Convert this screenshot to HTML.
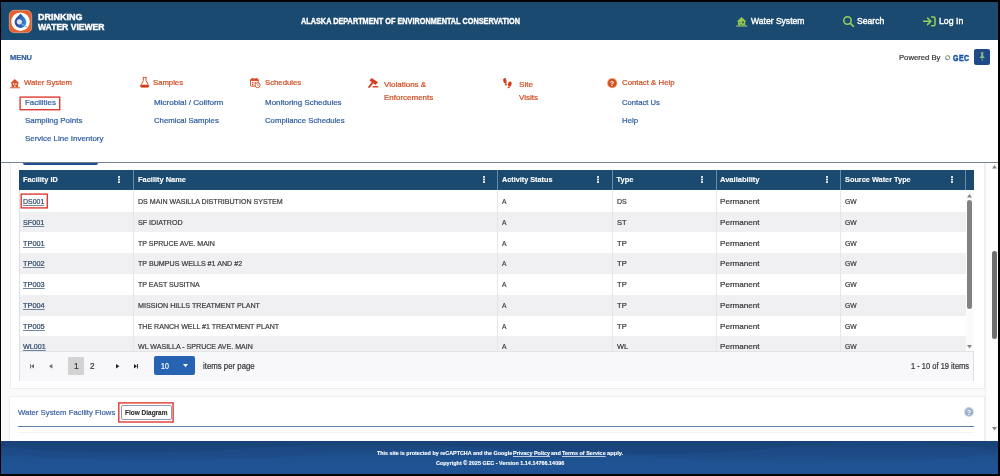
<!DOCTYPE html>
<html lang="en">
<head>
<meta charset="utf-8">
<title>Drinking Water Viewer</title>
<style>
*{box-sizing:border-box;margin:0;padding:0}
html,body{width:1000px;height:476px;overflow:hidden;background:#000}
body{position:relative;font-family:"Liberation Sans",sans-serif;color:#222}
.a{position:absolute}
.t{position:absolute;white-space:nowrap;line-height:1;z-index:5;transform-origin:0 0}
svg{position:absolute;overflow:visible}
#page{left:1.4px;top:2px;width:996.4px;height:472px;background:#fafafb}
#hdr{left:1.4px;top:2px;width:996.4px;height:38px;background:#1b4a70}
#menu{left:1.4px;top:40px;width:996.4px;height:122px;background:#fff}
#menuline{left:1.4px;top:162px;width:996.6px;height:1px;background:#75828f}
.card{background:#fff;border:1px solid #eceef1}
#card1{left:10px;top:150px;width:974.5px;height:238.5px}
#card2{left:9px;top:395.5px;width:975.5px;height:60px}
#btnrem{left:23.2px;top:160px;width:75.2px;height:5px;background:#1e4f8c;border-radius:0 0 3px 3px}
#grid{left:19px;top:170px;width:954.5px;height:211px;background:#fff;border:1px solid #dcdfe3;border-top:0}
#ghead{left:19px;top:170px;width:954.5px;height:20px;background:#1b4a70}
.sep{top:170px;width:1px;height:20px;background:#6f8ba3}
.vl{top:190px;width:1px;height:161px;background:#e4e6e9}
.row{left:19.5px;width:946px;height:20.8px;background:#f0f0f2}
.kb{width:2px;height:1.9px;background:#fff;border-radius:40%;box-shadow:0 2.5px 0 #fff,0 5px 0 #fff}
#pager{left:19.5px;top:351.2px;width:953.5px;height:29.4px;background:#f8f8fa;border-top:1px solid #e2e4e7}
#pg1{left:68.2px;top:356.8px;width:15.6px;height:18.3px;background:#d3d3d4;border-radius:1px}
#dd{left:153.8px;top:356.2px;width:40.8px;height:19.3px;background:#2763b3;border-radius:2px}
#gsb{left:965.5px;top:190px;width:8px;height:161px;background:#fbfbfb}
.thumb{background:#828282;border-radius:3px}
#psb{left:984.5px;top:163px;width:13.5px;height:278px;background:#fdfdfe;border-left:1px solid #eef0f3}
#foot{left:1.4px;top:441px;width:996.4px;height:33px;background:linear-gradient(180deg,#1a447b 0%,#1c4a84 30%,#1f5190 70%,#1f5190 100%);overflow:hidden}
#flowbtn{left:120.6px;top:405.1px;width:51.2px;height:15px;background:#fff;border:1px solid #8f9db2;border-radius:2px}
#blueline{left:18px;top:425.9px;width:955.5px;height:1px;background:#5a80a8}
#pin{left:973.9px;top:48.9px;width:16px;height:16px;background:#1f4a8a;border-radius:2px}
#txt{left:0;top:0;width:1000px;height:476px;will-change:transform}

</style>
</head>
<body>
<div class="a" id="page"></div>
<!-- cards / grid -->
<div class="a card" id="card1"></div>
<div class="a card" id="card2"></div>
<div class="a" id="grid"></div>
<div class="a row" style="top:211.6px"></div>
<div class="a row" style="top:253.2px"></div>
<div class="a row" style="top:294.8px"></div>
<div class="a row" style="top:336.4px;height:15px"></div>
<div class="a vl" style="left:133px"></div>
<div class="a vl" style="left:497px"></div>
<div class="a vl" style="left:611.5px"></div>
<div class="a vl" style="left:716px"></div>
<div class="a vl" style="left:840px"></div>
<div class="a" id="ghead"></div>
<div class="a sep" style="left:133px"></div>
<div class="a sep" style="left:497px"></div>
<div class="a sep" style="left:611.5px"></div>
<div class="a sep" style="left:716px"></div>
<div class="a sep" style="left:840px"></div>
<div class="a sep" style="left:965px"></div>
<div class="a kb" style="left:117.95px;top:176.3px"></div>
<div class="a kb" style="left:482.75px;top:176.3px"></div>
<div class="a kb" style="left:596.95px;top:176.3px"></div>
<div class="a kb" style="left:701.15px;top:176.3px"></div>
<div class="a kb" style="left:825.85px;top:176.3px"></div>
<div class="a kb" style="left:950.65px;top:176.3px"></div>
<div class="a" id="gsb"></div>
<div class="a thumb" style="left:967.2px;top:200.4px;width:4.6px;height:109px"></div>
<svg style="left:967px;top:193.6px" width="5" height="3.4" viewBox="0 0 5 3.4"><path d="M0 3.4L2.5 0L5 3.4Z" fill="#858585"/></svg>
<svg style="left:967.2px;top:345.4px" width="5" height="3.4" viewBox="0 0 5 3.4"><path d="M0 0L2.5 3.4L5 0Z" fill="#858585"/></svg>
<div class="a" id="pager"></div>
<div class="a" id="pg1"></div>
<div class="a" id="dd"></div>
<svg style="left:182.5px;top:364.3px" width="5" height="3.2" viewBox="0 0 5 3.2"><path d="M0 0L2.5 3.2L5 0Z" fill="#fff"/></svg>
<svg style="left:30px;top:363.6px" width="4" height="4.4" viewBox="0 0 4 4.4"><path d="M0 0H0.9V4.4H0ZM4 0V4.4L1 2.2Z" fill="#6d6d6d"/></svg>
<svg style="left:49px;top:363.6px" width="3.4" height="4.4" viewBox="0 0 3.4 4.4"><path d="M3.4 0V4.4L0 2.2Z" fill="#6d6d6d"/></svg>
<svg style="left:116px;top:363.6px" width="3.4" height="4.4" viewBox="0 0 3.4 4.4"><path d="M0 0V4.4L3.4 2.2Z" fill="#222"/></svg>
<svg style="left:134px;top:363.6px" width="4" height="4.4" viewBox="0 0 4 4.4"><path d="M3.1 0H4V4.4H3.1ZM0 0V4.4L3 2.2Z" fill="#222"/></svg>
<!-- card 2 -->
<div class="a" id="flowbtn"></div>
<div class="a" id="blueline"></div>
<div class="a" style="left:18px;top:432px;width:955.5px;height:1px;background:#f2f4f7"></div>
<svg style="left:963.5px;top:407px" width="10" height="10" viewBox="0 0 10 10"><circle cx="5" cy="5" r="4.9" fill="#c7d1e2"/><circle cx="5" cy="5" r="3.8" fill="#9cadc9"/><text x="5" y="7.6" font-size="7" font-weight="bold" fill="#fff" text-anchor="middle" font-family="Liberation Sans, sans-serif">?</text></svg>
<!-- page scrollbar -->
<div class="a" id="psb"></div>
<div class="a thumb" style="left:992.1px;top:251.4px;width:4.8px;height:87.2px;background:#6f6f6f"></div>
<svg style="left:992px;top:165px" width="5" height="3.4" viewBox="0 0 5 3.4"><path d="M0 3.4L2.5 0L5 3.4Z" fill="#858585"/></svg>
<svg style="left:992px;top:426.6px" width="5" height="3.4" viewBox="0 0 5 3.4"><path d="M0 0L2.5 3.4L5 0Z" fill="#858585"/></svg>
<!-- menu -->
<div class="a" id="menu"></div>
<div class="a" id="menuline"></div>
<div class="a" id="btnrem" style="top:163px;height:2px"></div>
<svg style="left:0;top:0" width="1000" height="476" viewBox="0 0 1000 476"><g fill="none" stroke="#de3b30" stroke-width="1.4"><rect x="20.1" y="97.1" width="39.6" height="12.6"/><rect x="21.2" y="194.1" width="26.1" height="13.8"/><rect x="118.8" y="402.9" width="54.3" height="19.1"/></g></svg>
<div class="a" id="pin"></div>
<!-- menu icons -->
<svg style="left:10px;top:78.8px" width="10" height="9.4" viewBox="0 0 10 9.4"><path d="M4.8 0L9.3 4.3H8.1V8.1H1.6V4.3H0.4Z" fill="#d8522b"/><rect x="2.9" y="4.3" width="1.4" height="1.5" fill="#fff" opacity="0.9"/><rect x="5.3" y="4.3" width="1.4" height="1.5" fill="#fff" opacity="0.9"/><rect x="4.1" y="6.5" width="1.5" height="1.6" fill="#fff" opacity="0.8"/><rect x="0" y="8.3" width="10" height="1" rx="0.4" fill="#d8522b"/></svg>
<svg style="left:139.6px;top:77.4px" width="9.4" height="10.6" viewBox="0 0 9.4 10.6"><path d="M3.4 0.4V3.6L0.6 8.6Q0.2 10 1.4 10H8Q9.2 10 8.8 8.6L6 3.6V0.4" stroke="#d7512a" stroke-width="0.95" fill="none" stroke-linejoin="round"/><path d="M2.6 0.45H6.8" stroke="#d7512a" stroke-width="0.9"/><path d="M1.5 7.8H7.9L8.8 9.6Q8.8 10.2 8 10.2H1.4Q0.6 10.2 0.6 9.6Z" fill="#d1381d"/></svg>
<svg style="left:250.2px;top:78.2px" width="10.4" height="10" viewBox="0 0 10.4 10"><rect x="0.5" y="0.9" width="7.8" height="7.3" rx="1" fill="#fff" stroke="#d7512a" stroke-width="0.95"/><path d="M0.5 1.9Q0.5 0.9 1.5 0.9H7.3Q8.3 0.9 8.3 1.9V2.9H0.5Z" fill="#d7512a"/><rect x="2" y="0" width="1" height="1.6" fill="#d7512a"/><rect x="5.8" y="0" width="1" height="1.6" fill="#d7512a"/><rect x="2" y="4.1" width="1.5" height="1.3" fill="#d7512a"/><rect x="4.4" y="4.1" width="1.5" height="1.3" fill="#d7512a"/><rect x="2" y="6" width="1.5" height="1.3" fill="#d7512a"/><circle cx="7.6" cy="7.2" r="2.5" fill="#fff" stroke="#d7512a" stroke-width="0.95"/><path d="M7.6 5.9V7.3H8.6" stroke="#d7512a" stroke-width="0.7" fill="none"/></svg>
<svg style="left:367.6px;top:78.4px" width="10.6" height="9.8" viewBox="0 0 10.6 9.8"><path d="M3.5 0L9.9 4.1L7.7 7L1.5 2.6Z" fill="#d4401f"/><path d="M5.2 3.8L1.1 9" stroke="#d4401f" stroke-width="1.9" stroke-linecap="round"/><path d="M4.7 8.8H10.3" stroke="#d4401f" stroke-width="1.4"/></svg>
<svg style="left:503.4px;top:77.8px" width="9" height="10.2" viewBox="0 0 9 10.2"><ellipse cx="1.9" cy="2.8" rx="1.65" ry="2.75" transform="rotate(-12 1.9 2.8)" fill="#d4401f"/><ellipse cx="2.9" cy="6.5" rx="1.1" ry="0.9" fill="#d4401f"/><ellipse cx="6.8" cy="6.1" rx="1.8" ry="2.7" transform="rotate(12 6.8 6.1)" fill="#d4401f"/><ellipse cx="5.7" cy="9.5" rx="1.1" ry="0.8" fill="#d4401f"/></svg>
<svg style="left:607.2px;top:77.9px" width="10.4" height="10.4" viewBox="0 0 10.4 10.4"><circle cx="5.2" cy="5.2" r="5.1" fill="#eb9b7c"/><circle cx="5.2" cy="5.2" r="4.1" fill="#d4501e"/><text x="5.2" y="7.7" font-size="6.8" font-weight="bold" fill="#fff" text-anchor="middle" font-family="Liberation Sans, sans-serif">?</text></svg>
<!-- GEC ring + pin -->
<svg style="left:944.6px;top:54.9px" width="5.4" height="5.4" viewBox="0 0 5.4 5.4"><circle cx="2.7" cy="2.7" r="2.05" fill="none" stroke="#8b9a86" stroke-width="1"/><path d="M2.7 0.65A2.05 2.05 0 0 1 4.75 2.7" stroke="#7fae55" stroke-width="1" fill="none"/><path d="M0.65 2.7A2.05 2.05 0 0 0 2.7 4.75" stroke="#5f86ad" stroke-width="1" fill="none"/></svg>
<svg style="left:978.7px;top:52.2px" width="6.4" height="9" viewBox="0 0 6.4 9"><path d="M1.8 0.2H4.6V0.9H4.2V3.9L5.7 5.4V6.1H0.7V5.4L2.2 3.9V0.9H1.8Z" fill="#86c07c"/><path d="M3.2 6.1V8.8" stroke="#86c07c" stroke-width="0.8"/></svg>

<!-- header -->
<div class="a" id="hdr"></div>
<!-- logo -->
<svg style="left:9.3px;top:9.7px" width="23" height="23" viewBox="0 0 23 23"><defs><linearGradient id="dg" x1="0" y1="0" x2="1" y2="0"><stop offset="0" stop-color="#2a4a94"/><stop offset="0.55" stop-color="#2c62b4"/><stop offset="1" stop-color="#3b92dc"/></linearGradient></defs><rect x="0.3" y="0.3" width="22.4" height="22.4" rx="5" fill="#e7612c" stroke="#f3b79c" stroke-width="0.6"/><circle cx="11.5" cy="11.7" r="9.3" fill="#fff"/><path d="M11.5 3.4C13.6 6 17.4 8.6 17.4 12.1A5.9 5.9 0 0 1 5.6 12.1C5.6 8.6 9.4 6 11.5 3.4Z" fill="url(#dg)"/><circle cx="10.4" cy="11.8" r="2.6" fill="#e3dff0"/><path d="M12.6 13.9L17.6 17" stroke="#7db7e8" stroke-width="1.1" stroke-linecap="round"/></svg>
<!-- nav icons -->
<svg style="left:736px;top:16.8px" width="11.4" height="9.6" viewBox="0 0 11.4 9.6"><path d="M5.6 0L10.4 4.5H9.2V8.3H2V4.5H0.8Z" fill="#95ca4c"/><rect x="3.3" y="4.7" width="1.3" height="1.4" fill="#1b4a70" opacity="0.5"/><rect x="6.1" y="4.5" width="1.8" height="1.8" fill="#1b4a70" opacity="0.9"/><rect x="4.5" y="6.9" width="1.4" height="1.4" fill="#1b4a70" opacity="0.45"/><rect x="0" y="8.4" width="11.4" height="1.1" rx="0.4" fill="#a5d465"/></svg>
<svg style="left:842.6px;top:16.2px" width="11" height="11" viewBox="0 0 11 11"><circle cx="4.5" cy="4.5" r="3.7" fill="none" stroke="#9bcf5a" stroke-width="1.5"/><path d="M7.4 7.4L10.4 10.4" stroke="#9bcf5a" stroke-width="1.6" stroke-linecap="round"/></svg>
<svg style="left:922.6px;top:16px" width="13" height="11" viewBox="0 0 13 11"><path d="M0.5 5.3H7.2" stroke="#9bcf5a" stroke-width="1.5" stroke-linecap="round"/><path d="M4.5 2L7.9 5.3L4.5 8.6" stroke="#9bcf5a" stroke-width="1.5" fill="none" stroke-linecap="round" stroke-linejoin="round"/><path d="M8.6 0.9H10.7Q12 0.9 12 2.2V8.4Q12 9.7 10.7 9.7H8.6" stroke="#9bcf5a" stroke-width="1.5" fill="none" stroke-linecap="round"/></svg>

<!-- footer -->
<div class="a" id="foot"><svg style="left:0;top:0" width="996" height="33" viewBox="0 0 996 33"><path d="M0 6Q120 16 250 7T520 9T780 6T996 10V0H0Z" fill="#183f73" opacity="0.35"/><path d="M0 14Q160 24 330 13T660 16T996 13V33H0Z" fill="#22589a" opacity="0.28"/></svg></div>
<div class="a" id="txt">
<span class="t" id="t0" style="left:37.70px;top:13.00px;font-size:8.7px;color:#fff;font-weight:bold;transform:scaleX(1.033);-webkit-text-stroke:0.4px #fff;">DRINKING</span>
<span class="t" id="t1" style="left:37.70px;top:23.00px;font-size:8.7px;color:#fff;font-weight:bold;transform:scaleX(0.986);-webkit-text-stroke:0.4px #fff;">WATER VIEWER</span>
<span class="t" id="t2" style="left:301.10px;top:18.00px;font-size:8.2px;color:#fff;font-weight:bold;transform:scaleX(0.891);-webkit-text-stroke:0.35px #fff;">ALASKA DEPARTMENT OF ENVIRONMENTAL CONSERVATION</span>
<span class="t" id="t3" style="left:750.80px;top:17.00px;font-size:8.9px;color:#fff;transform:scaleX(0.964);-webkit-text-stroke:0.38px #fff;">Water System</span>
<span class="t" id="t4" style="left:856.90px;top:17.00px;font-size:8.9px;color:#fff;transform:scaleX(0.971);-webkit-text-stroke:0.38px #fff;">Search</span>
<span class="t" id="t5" style="left:939.10px;top:17.00px;font-size:8.9px;color:#fff;transform:scaleX(0.984);-webkit-text-stroke:0.38px #fff;">Log In</span>
<span class="t" id="t6" style="left:9.70px;top:54.00px;font-size:7.5px;color:#2d5c9f;font-weight:bold;transform:scaleX(0.996);-webkit-text-stroke:0.2px #2d5c9f;">MENU</span>
<span class="t" id="t7" style="left:898.60px;top:54.00px;font-size:7.55px;color:#333;transform:scaleX(1.017);-webkit-text-stroke:0.2px #333;">Powered By</span>
<span class="t" id="t8" style="left:952.70px;top:54.00px;font-size:8.6px;color:#1452a3;font-weight:bold;transform:scaleX(0.820);-webkit-text-stroke:0.45px #1452a3;letter-spacing:0.5px;">GEC</span>
<span class="t" id="t9" style="left:24.20px;top:79.00px;font-size:7.55px;color:#cf4a1f;transform:scaleX(1.019);-webkit-text-stroke:0.2px #cf4a1f;">Water System</span>
<span class="t" id="t10" style="left:24.80px;top:99.00px;font-size:7.55px;color:#2d5c9f;transform:scaleX(1.056);-webkit-text-stroke:0.2px #2d5c9f;">Facilities</span>
<span class="t" id="t11" style="left:24.80px;top:117.00px;font-size:7.55px;color:#2d5c9f;transform:scaleX(1.052);-webkit-text-stroke:0.2px #2d5c9f;">Sampling Points</span>
<span class="t" id="t12" style="left:24.60px;top:135.00px;font-size:7.55px;color:#2d5c9f;transform:scaleX(1.050);-webkit-text-stroke:0.2px #2d5c9f;">Service Line Inventory</span>
<span class="t" id="t13" style="left:153.20px;top:79.00px;font-size:7.55px;color:#cf4a1f;transform:scaleX(1.021);-webkit-text-stroke:0.2px #cf4a1f;">Samples</span>
<span class="t" id="t14" style="left:154.00px;top:99.00px;font-size:7.55px;color:#2d5c9f;transform:scaleX(1.074);-webkit-text-stroke:0.2px #2d5c9f;">Microbial / Coliform</span>
<span class="t" id="t15" style="left:154.00px;top:117.00px;font-size:7.55px;color:#2d5c9f;transform:scaleX(1.030);-webkit-text-stroke:0.2px #2d5c9f;">Chemical Samples</span>
<span class="t" id="t16" style="left:264.60px;top:79.00px;font-size:7.55px;color:#cf4a1f;transform:scaleX(1.027);-webkit-text-stroke:0.2px #cf4a1f;">Schedules</span>
<span class="t" id="t17" style="left:265.20px;top:99.00px;font-size:7.55px;color:#2d5c9f;transform:scaleX(1.055);-webkit-text-stroke:0.2px #2d5c9f;">Monitoring Schedules</span>
<span class="t" id="t18" style="left:265.20px;top:117.00px;font-size:7.55px;color:#2d5c9f;transform:scaleX(1.031);-webkit-text-stroke:0.2px #2d5c9f;">Compliance Schedules</span>
<span class="t" id="t19" style="left:384.00px;top:81.00px;font-size:7.55px;color:#cf4a1f;transform:scaleX(1.062);-webkit-text-stroke:0.2px #cf4a1f;">Violations &amp;</span>
<span class="t" id="t20" style="left:384.00px;top:94.00px;font-size:7.55px;color:#cf4a1f;transform:scaleX(1.057);-webkit-text-stroke:0.2px #cf4a1f;">Enforcements</span>
<span class="t" id="t21" style="left:519.20px;top:81.00px;font-size:7.55px;color:#cf4a1f;transform:scaleX(1.076);-webkit-text-stroke:0.2px #cf4a1f;">Site</span>
<span class="t" id="t22" style="left:519.20px;top:94.00px;font-size:7.55px;color:#cf4a1f;transform:scaleX(1.061);-webkit-text-stroke:0.2px #cf4a1f;">Visits</span>
<span class="t" id="t23" style="left:621.60px;top:79.00px;font-size:7.55px;color:#cf4a1f;transform:scaleX(1.036);-webkit-text-stroke:0.2px #cf4a1f;">Contact &amp; Help</span>
<span class="t" id="t24" style="left:622.40px;top:99.00px;font-size:7.55px;color:#2d5c9f;transform:scaleX(1.012);-webkit-text-stroke:0.2px #2d5c9f;">Contact Us</span>
<span class="t" id="t25" style="left:622.40px;top:117.00px;font-size:7.55px;color:#2d5c9f;transform:scaleX(1.043);-webkit-text-stroke:0.2px #2d5c9f;">Help</span>
<span class="t" id="t26" style="left:22.50px;top:176.00px;font-size:7.55px;color:#fff;font-weight:bold;transform:scaleX(0.976);-webkit-text-stroke:0.12px #fff;">Facility ID</span>
<span class="t" id="t27" style="left:137.60px;top:176.00px;font-size:7.55px;color:#fff;font-weight:bold;transform:scaleX(0.986);-webkit-text-stroke:0.12px #fff;">Facility Name</span>
<span class="t" id="t28" style="left:501.60px;top:176.00px;font-size:7.55px;color:#fff;font-weight:bold;transform:scaleX(0.963);-webkit-text-stroke:0.12px #fff;">Activity Status</span>
<span class="t" id="t29" style="left:616.50px;top:176.00px;font-size:7.55px;color:#fff;font-weight:bold;-webkit-text-stroke:0.12px #fff;">Type</span>
<span class="t" id="t30" style="left:720.00px;top:176.00px;font-size:7.55px;color:#fff;font-weight:bold;-webkit-text-stroke:0.12px #fff;">Availability</span>
<span class="t" id="t31" style="left:845.10px;top:176.00px;font-size:7.55px;color:#fff;font-weight:bold;transform:scaleX(0.973);-webkit-text-stroke:0.12px #fff;">Source Water Type</span>
<span class="t" id="t32" style="left:22.90px;top:198.00px;font-size:7.55px;color:#2a4668;transform:scaleX(0.923);-webkit-text-stroke:0.2px #2a4668;text-decoration:underline;text-underline-offset:0.8px;text-decoration-thickness:0.6px;text-decoration-color:rgba(42,70,104,0.65);">DS001</span>
<span class="t" id="t33" style="left:137.60px;top:198.00px;font-size:7.55px;color:#383838;transform:scaleX(0.939);-webkit-text-stroke:0.2px #383838;">DS MAIN WASILLA DISTRIBUTION SYSTEM</span>
<span class="t" id="t34" style="left:501.60px;top:198.00px;font-size:7.55px;color:#383838;transform:scaleX(0.892);-webkit-text-stroke:0.2px #383838;">A</span>
<span class="t" id="t35" style="left:616.50px;top:198.00px;font-size:7.55px;color:#383838;transform:scaleX(0.925);-webkit-text-stroke:0.2px #383838;">DS</span>
<span class="t" id="t36" style="left:720.00px;top:198.00px;font-size:7.55px;color:#383838;transform:scaleX(1.073);-webkit-text-stroke:0.2px #383838;">Permanent</span>
<span class="t" id="t37" style="left:845.10px;top:198.00px;font-size:7.55px;color:#383838;transform:scaleX(0.900);-webkit-text-stroke:0.2px #383838;">GW</span>
<span class="t" id="t38" style="left:22.90px;top:219.00px;font-size:7.55px;color:#2a4668;transform:scaleX(0.957);-webkit-text-stroke:0.2px #2a4668;text-decoration:underline;text-underline-offset:0.8px;text-decoration-thickness:0.6px;text-decoration-color:rgba(42,70,104,0.65);">SF001</span>
<span class="t" id="t39" style="left:137.60px;top:219.00px;font-size:7.55px;color:#383838;transform:scaleX(0.944);-webkit-text-stroke:0.2px #383838;">SF IDIATROD</span>
<span class="t" id="t40" style="left:501.60px;top:219.00px;font-size:7.55px;color:#383838;transform:scaleX(0.892);-webkit-text-stroke:0.2px #383838;">A</span>
<span class="t" id="t41" style="left:616.50px;top:219.00px;font-size:7.55px;color:#383838;transform:scaleX(1.005);-webkit-text-stroke:0.2px #383838;">ST</span>
<span class="t" id="t42" style="left:720.00px;top:219.00px;font-size:7.55px;color:#383838;transform:scaleX(1.073);-webkit-text-stroke:0.2px #383838;">Permanent</span>
<span class="t" id="t43" style="left:845.10px;top:219.00px;font-size:7.55px;color:#383838;transform:scaleX(0.900);-webkit-text-stroke:0.2px #383838;">GW</span>
<span class="t" id="t44" style="left:22.90px;top:240.00px;font-size:7.55px;color:#2a4668;transform:scaleX(0.975);-webkit-text-stroke:0.2px #2a4668;text-decoration:underline;text-underline-offset:0.8px;text-decoration-thickness:0.6px;text-decoration-color:rgba(42,70,104,0.65);">TP001</span>
<span class="t" id="t45" style="left:137.60px;top:240.00px;font-size:7.55px;color:#383838;transform:scaleX(0.934);-webkit-text-stroke:0.2px #383838;">TP SPRUCE AVE. MAIN</span>
<span class="t" id="t46" style="left:501.60px;top:240.00px;font-size:7.55px;color:#383838;transform:scaleX(0.892);-webkit-text-stroke:0.2px #383838;">A</span>
<span class="t" id="t47" style="left:616.50px;top:240.00px;font-size:7.55px;color:#383838;transform:scaleX(1.005);-webkit-text-stroke:0.2px #383838;">TP</span>
<span class="t" id="t48" style="left:720.00px;top:240.00px;font-size:7.55px;color:#383838;transform:scaleX(1.073);-webkit-text-stroke:0.2px #383838;">Permanent</span>
<span class="t" id="t49" style="left:845.10px;top:240.00px;font-size:7.55px;color:#383838;transform:scaleX(0.900);-webkit-text-stroke:0.2px #383838;">GW</span>
<span class="t" id="t50" style="left:22.90px;top:260.00px;font-size:7.55px;color:#2a4668;transform:scaleX(0.975);-webkit-text-stroke:0.2px #2a4668;text-decoration:underline;text-underline-offset:0.8px;text-decoration-thickness:0.6px;text-decoration-color:rgba(42,70,104,0.65);">TP002</span>
<span class="t" id="t51" style="left:137.60px;top:260.00px;font-size:7.55px;color:#383838;transform:scaleX(0.945);-webkit-text-stroke:0.2px #383838;">TP BUMPUS WELLS #1 AND #2</span>
<span class="t" id="t52" style="left:501.60px;top:260.00px;font-size:7.55px;color:#383838;transform:scaleX(0.892);-webkit-text-stroke:0.2px #383838;">A</span>
<span class="t" id="t53" style="left:616.50px;top:260.00px;font-size:7.55px;color:#383838;transform:scaleX(1.005);-webkit-text-stroke:0.2px #383838;">TP</span>
<span class="t" id="t54" style="left:720.00px;top:260.00px;font-size:7.55px;color:#383838;transform:scaleX(1.073);-webkit-text-stroke:0.2px #383838;">Permanent</span>
<span class="t" id="t55" style="left:845.10px;top:260.00px;font-size:7.55px;color:#383838;transform:scaleX(0.900);-webkit-text-stroke:0.2px #383838;">GW</span>
<span class="t" id="t56" style="left:22.90px;top:281.00px;font-size:7.55px;color:#2a4668;transform:scaleX(0.975);-webkit-text-stroke:0.2px #2a4668;text-decoration:underline;text-underline-offset:0.8px;text-decoration-thickness:0.6px;text-decoration-color:rgba(42,70,104,0.65);">TP003</span>
<span class="t" id="t57" style="left:137.60px;top:281.00px;font-size:7.55px;color:#383838;transform:scaleX(0.935);-webkit-text-stroke:0.2px #383838;">TP EAST SUSITNA</span>
<span class="t" id="t58" style="left:501.60px;top:281.00px;font-size:7.55px;color:#383838;transform:scaleX(0.892);-webkit-text-stroke:0.2px #383838;">A</span>
<span class="t" id="t59" style="left:616.50px;top:281.00px;font-size:7.55px;color:#383838;transform:scaleX(1.005);-webkit-text-stroke:0.2px #383838;">TP</span>
<span class="t" id="t60" style="left:720.00px;top:281.00px;font-size:7.55px;color:#383838;transform:scaleX(1.073);-webkit-text-stroke:0.2px #383838;">Permanent</span>
<span class="t" id="t61" style="left:845.10px;top:281.00px;font-size:7.55px;color:#383838;transform:scaleX(0.900);-webkit-text-stroke:0.2px #383838;">GW</span>
<span class="t" id="t62" style="left:22.90px;top:302.00px;font-size:7.55px;color:#2a4668;transform:scaleX(0.975);-webkit-text-stroke:0.2px #2a4668;text-decoration:underline;text-underline-offset:0.8px;text-decoration-thickness:0.6px;text-decoration-color:rgba(42,70,104,0.65);">TP004</span>
<span class="t" id="t63" style="left:137.60px;top:302.00px;font-size:7.55px;color:#383838;transform:scaleX(0.947);-webkit-text-stroke:0.2px #383838;">MISSION HILLS TREATMENT PLANT</span>
<span class="t" id="t64" style="left:501.60px;top:302.00px;font-size:7.55px;color:#383838;transform:scaleX(0.892);-webkit-text-stroke:0.2px #383838;">A</span>
<span class="t" id="t65" style="left:616.50px;top:302.00px;font-size:7.55px;color:#383838;transform:scaleX(1.005);-webkit-text-stroke:0.2px #383838;">TP</span>
<span class="t" id="t66" style="left:720.00px;top:302.00px;font-size:7.55px;color:#383838;transform:scaleX(1.073);-webkit-text-stroke:0.2px #383838;">Permanent</span>
<span class="t" id="t67" style="left:845.10px;top:302.00px;font-size:7.55px;color:#383838;transform:scaleX(0.900);-webkit-text-stroke:0.2px #383838;">GW</span>
<span class="t" id="t68" style="left:22.90px;top:323.00px;font-size:7.55px;color:#2a4668;transform:scaleX(0.975);-webkit-text-stroke:0.2px #2a4668;text-decoration:underline;text-underline-offset:0.8px;text-decoration-thickness:0.6px;text-decoration-color:rgba(42,70,104,0.65);">TP005</span>
<span class="t" id="t69" style="left:137.60px;top:323.00px;font-size:7.55px;color:#383838;transform:scaleX(0.936);-webkit-text-stroke:0.2px #383838;">THE RANCH WELL #1 TREATMENT PLANT</span>
<span class="t" id="t70" style="left:501.60px;top:323.00px;font-size:7.55px;color:#383838;transform:scaleX(0.892);-webkit-text-stroke:0.2px #383838;">A</span>
<span class="t" id="t71" style="left:616.50px;top:323.00px;font-size:7.55px;color:#383838;transform:scaleX(1.005);-webkit-text-stroke:0.2px #383838;">TP</span>
<span class="t" id="t72" style="left:720.00px;top:323.00px;font-size:7.55px;color:#383838;transform:scaleX(1.073);-webkit-text-stroke:0.2px #383838;">Permanent</span>
<span class="t" id="t73" style="left:845.10px;top:323.00px;font-size:7.55px;color:#383838;transform:scaleX(0.900);-webkit-text-stroke:0.2px #383838;">GW</span>
<span class="t" id="t74" style="left:22.90px;top:343.00px;font-size:7.55px;color:#2a4668;transform:scaleX(0.949);-webkit-text-stroke:0.2px #2a4668;text-decoration:underline;text-underline-offset:0.8px;text-decoration-thickness:0.6px;text-decoration-color:rgba(42,70,104,0.65);">WL001</span>
<span class="t" id="t75" style="left:137.60px;top:343.00px;font-size:7.55px;color:#383838;transform:scaleX(0.937);-webkit-text-stroke:0.2px #383838;">WL WASILLA - SPRUCE AVE. MAIN</span>
<span class="t" id="t76" style="left:501.60px;top:343.00px;font-size:7.55px;color:#383838;transform:scaleX(0.892);-webkit-text-stroke:0.2px #383838;">A</span>
<span class="t" id="t77" style="left:616.50px;top:343.00px;font-size:7.55px;color:#383838;transform:scaleX(0.989);-webkit-text-stroke:0.2px #383838;">WL</span>
<span class="t" id="t78" style="left:720.00px;top:343.00px;font-size:7.55px;color:#383838;transform:scaleX(1.073);-webkit-text-stroke:0.2px #383838;">Permanent</span>
<span class="t" id="t79" style="left:845.10px;top:343.00px;font-size:7.55px;color:#383838;transform:scaleX(0.900);-webkit-text-stroke:0.2px #383838;">GW</span>
<span class="t" id="t80" style="left:73.50px;top:362.00px;font-size:8.3px;color:#333;transform:scaleX(1.016);-webkit-text-stroke:0.2px #333;">1</span>
<span class="t" id="t81" style="left:89.60px;top:362.00px;font-size:8.3px;color:#333;transform:scaleX(0.995);-webkit-text-stroke:0.2px #333;">2</span>
<span class="t" id="t82" style="left:160.50px;top:362.00px;font-size:8.3px;color:#fff;transform:scaleX(0.845);-webkit-text-stroke:0.2px #fff;">10</span>
<span class="t" id="t83" style="left:202.60px;top:362.00px;font-size:8.3px;color:#333;transform:scaleX(0.942);-webkit-text-stroke:0.2px #333;">items per page</span>
<span class="t" id="t84" style="left:911.40px;top:362.00px;font-size:8.3px;color:#333;transform:scaleX(0.906);-webkit-text-stroke:0.2px #333;">1 - 10 of 19 items</span>
<span class="t" id="t85" style="left:17.70px;top:409.00px;font-size:8px;color:#3a62a0;transform:scaleX(0.972);-webkit-text-stroke:0.2px #3a62a0;">Water System Facility Flows</span>
<span class="t" id="t86" style="left:125.00px;top:409.00px;font-size:7.3px;color:#2b2b2b;font-weight:bold;transform:scaleX(0.888);-webkit-text-stroke:0.12px #2b2b2b;">Flow Diagram</span>
<span class="t" id="t87" style="left:377.00px;top:450.00px;font-size:6.2px;color:#fff;font-weight:bold;transform:scaleX(0.871);-webkit-text-stroke:0.12px #fff;">This site is protected by reCAPTCHA and the Google </span>
<span class="t" id="t88" style="left:512.50px;top:450.00px;font-size:6.2px;color:#fff;font-weight:bold;transform:scaleX(0.882);-webkit-text-stroke:0.12px #fff;text-decoration:underline;text-underline-offset:0.5px;text-decoration-thickness:0.6px;text-decoration-color:rgba(255,255,255,0.7);">Privacy Policy</span>
<span class="t" id="t89" style="left:550.80px;top:450.00px;font-size:6.2px;color:#fff;font-weight:bold;transform:scaleX(0.890);-webkit-text-stroke:0.12px #fff;">and</span>
<span class="t" id="t90" style="left:561.80px;top:450.00px;font-size:6.2px;color:#fff;font-weight:bold;transform:scaleX(0.884);-webkit-text-stroke:0.12px #fff;text-decoration:underline;text-underline-offset:0.5px;text-decoration-thickness:0.6px;text-decoration-color:rgba(255,255,255,0.7);">Terms of Service</span>
<span class="t" id="t91" style="left:606.80px;top:450.00px;font-size:6.2px;color:#fff;font-weight:bold;transform:scaleX(0.924);-webkit-text-stroke:0.12px #fff;">apply.</span>
<span class="t" id="t92" style="left:435.80px;top:460.00px;font-size:6.2px;color:#fff;font-weight:bold;transform:scaleX(0.881);-webkit-text-stroke:0.12px #fff;">Copyright © 2025 GEC - Version 1.14.14766.14096</span>
</div>

</body>
</html>
